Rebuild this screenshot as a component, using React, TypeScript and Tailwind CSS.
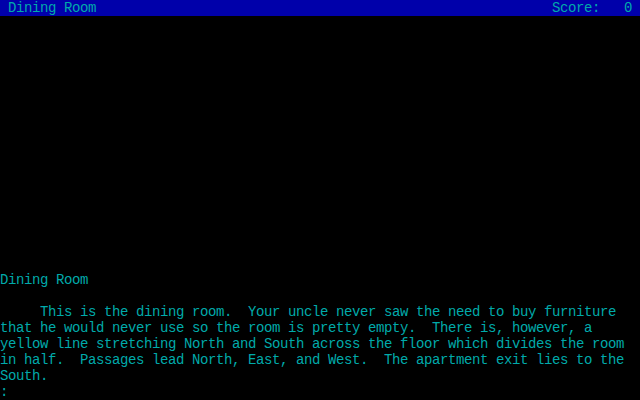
import React from 'react';

const LINES = [
  'Dining Room',
  '',
  '     This is the dining room.  Your uncle never saw the need to buy furniture',
  'that he would never use so the room is pretty empty.  There is, however, a',
  'yellow line stretching North and South across the floor which divides the room',
  'in half.  Passages lead North, East, and West.  The apartment exit lies to the',
  'South.',
  ':',
];

const App: React.FC = () => {
  return (
    <div
      className="w-[640px] h-[400px] bg-black text-[#00AAAA] flex flex-col overflow-hidden text-[14px] leading-[16px] tracking-[-0.4px]"
      style={{ fontFamily: '"Liberation Mono", "DejaVu Sans Mono", monospace' }}
    >
      {/* status bar */}
      <div className="h-4 bg-[#0000AA] flex justify-between px-2 whitespace-pre">
        <span>Dining Room</span>
        <span>Score:   0</span>
      </div>

      {/* room output, sits at the bottom of the screen */}
      <div className="flex-1 flex flex-col justify-end">
        {LINES.map((line, i) => (
          <div key={i} className="h-4 whitespace-pre">
            {line}
          </div>
        ))}
      </div>
    </div>
  );
};

export default App;
